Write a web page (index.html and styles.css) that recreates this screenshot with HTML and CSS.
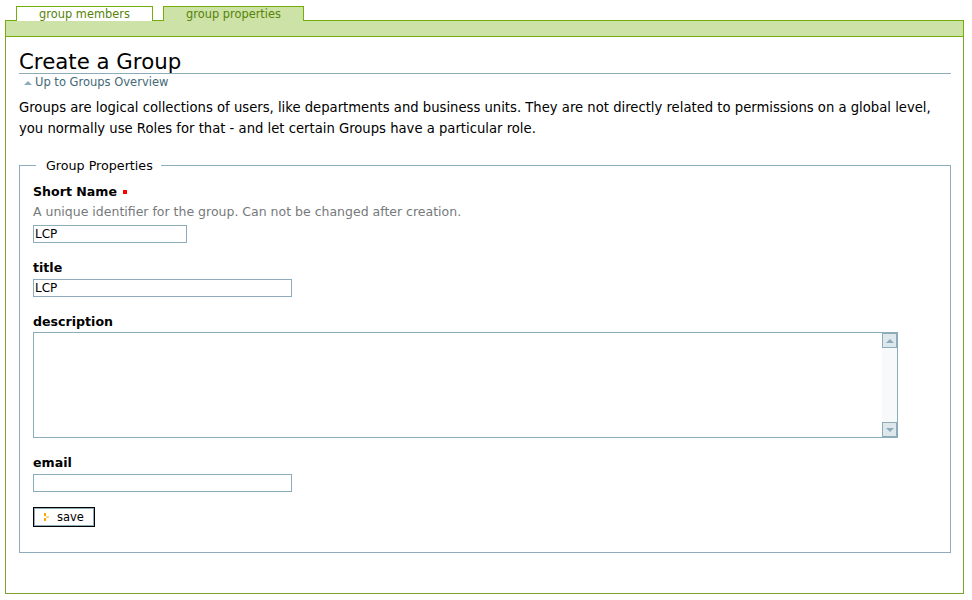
FILE: index.html
```html
<!DOCTYPE html>
<html>
<head>
<meta charset="utf-8">
<link rel="stylesheet" href="styles.css">
</head>
<body>
<div class="tabs">
  <a class="tab">group members</a>
  <a class="tab active">group properties</a>
</div>
<div class="bar"></div>
<div class="content">
  <h1 class="title">Create a Group</h1>
  <a class="up"><span class="up-arrow"></span>Up to Groups Overview</a>
  <p class="intro">Groups are logical collections of users, like departments and business units. They are not directly related to permissions on a global level, you normally use Roles for that - and let certain Groups have a particular role.</p>
  <fieldset class="props">
    <legend class="legend">Group Properties</legend>
    <div class="field">
      <label class="label">Short Name <span class="req"></span></label>
      <div class="help">A unique identifier for the group. Can not be changed after creation.</div>
      <input class="inp short" type="text" value="LCP">
    </div>
    <div class="field">
      <label class="label">title</label>
      <input class="inp mid" type="text" value="LCP">
    </div>
    <div class="field">
      <label class="label">description</label>
      <div class="ta">
        <textarea class="ta-input"></textarea>
        <div class="sb">
          <div class="sb-btn"><span class="tri-up"></span></div>
          <div class="sb-track"></div>
          <div class="sb-btn"><span class="tri-down"></span></div>
        </div>
      </div>
    </div>
    <div class="field last">
      <label class="label">email</label>
      <input class="inp mid" type="text" value="">
    </div>
    <button class="save"><svg class="save-ico" width="5" height="8" viewBox="0 0 5 8" shape-rendering="crispEdges"><rect x="0" y="0" width="2" height="3" fill="#ffa500"/><rect x="0" y="5" width="2" height="3" fill="#ffa500"/><rect x="2" y="3" width="3" height="2" fill="#ffd28a"/></svg>save</button>
  </fieldset>
</div>
</body>
</html>
```
FILE: styles.css
```css
html, body {
  margin: 0;
  background: #fff;
}
body {
  padding: 6px 8px 0 5px;
  font-family: "DejaVu Sans", Verdana, sans-serif;
  font-size: 12px;
  color: #000;
}
.tabs {
  display: flex;
  gap: 10px;
  padding-left: 11px;
  height: 14px;
  position: relative;
  z-index: 1;
}
.tab {
  display: block;
  box-sizing: border-box;
  height: 15px;
  border: 1px solid #74ae0b;
  border-bottom: none;
  background: #fff;
  color: #578308;
  font-size: 11.4px;
  line-height: 15px;
  text-align: center;
  width: 137px;
}
.tab.active {
  width: 141px;
  background: #cde2a7;
}
.bar {
  height: 15px;
  border: 1px solid #74ae0b;
  background: #cde2a7;
  width: 957px;
}
.content {
  border: 1px solid #7aa22e;
  border-top: none;
  padding: 14px 12px 40px 13px;
  width: 932px;
}
.title {
  margin: 0;
  font-family: "DejaVu Sans", Verdana, sans-serif;
  font-weight: normal;
  font-size: 21.3px;
  line-height: 22px;
  border-bottom: 1px solid #8cacbb;
  height: 22px;
}
.up {
  display: flex;
  align-items: center;
  color: #436976;
  font-size: 11.5px;
  line-height: 15px;
  padding: 1px 0 0 5px;
}
.up-arrow {
  display: inline-block;
  width: 0;
  height: 0;
  border-left: 4px solid transparent;
  border-right: 4px solid transparent;
  border-bottom: 4px solid #8cacbb;
  margin-right: 3px;
}
.intro {
  margin: 7px 0 0 0;
  font-size: 13.2px;
  line-height: 21px;
}
.props {
  margin: 19px 0 0 0;
  border: 1px solid #8cacbb;
  padding: 11px 13px 25px 13px;
}
.legend {
  padding: 0 8px 0 10px;
  margin-left: 3px;
  font-size: 12.7px;
}
.field {
  margin-bottom: 17px;
}
.field.last {
  margin-bottom: 15px;
}
.label {
  display: flex;
  align-items: center;
  font-weight: bold;
  font-size: 12.6px;
  line-height: 16px;
}
.req {
  display: inline-block;
  width: 4px;
  height: 4px;
  background: #f00;
  margin-left: 6px;
}
.help {
  color: #76797c;
  font-size: 12.5px;
  line-height: 18px;
  margin: 3px 0 4px 0;
}
.inp {
  display: block;
  box-sizing: border-box;
  height: 18px;
  border: 1px solid #8cacbb;
  font-family: "DejaVu Sans", sans-serif;
  font-size: 12px;
  padding: 0 0 0 1px;
  margin: 3px 0 0 0;
  outline: none;
  color: #000;
}
.inp.short { width: 154px; }
.inp.mid { width: 259px; }
.ta {
  display: flex;
  box-sizing: border-box;
  width: 865px;
  height: 106px;
  border: 1px solid #8cacbb;
  margin-top: 2px;
}
.ta-input {
  flex: 1;
  border: none;
  outline: none;
  resize: none;
  margin: 0;
  padding: 0;
}
.sb {
  width: 15px;
  display: flex;
  flex-direction: column;
  background: #f7f9fa;
}
.sb-btn {
  box-sizing: border-box;
  width: 15px;
  height: 15px;
  border: 1px solid #8cacbb;
  background: #dee7ec;
  display: flex;
  align-items: center;
  justify-content: center;
}
.sb-track { flex: 1; }
.tri-up {
  width: 0; height: 0;
  border-left: 4px solid transparent;
  border-right: 4px solid transparent;
  border-bottom: 4px solid #8cacbb;
}
.tri-down {
  width: 0; height: 0;
  border-left: 4px solid transparent;
  border-right: 4px solid transparent;
  border-top: 4px solid #8cacbb;
}
.save {
  display: flex;
  align-items: center;
  box-sizing: border-box;
  width: 62px;
  height: 20px;
  margin: 0;
  border: 1px solid #000;
  box-shadow: inset 0 0 0 1px #8cacbb;
  background: #fff;
  font-family: "DejaVu Sans", sans-serif;
  font-size: 11.5px;
  padding: 0 0 0 10px;
  color: #000;
}
.save-ico {
  display: block;
  margin-right: 8px;
}
```
